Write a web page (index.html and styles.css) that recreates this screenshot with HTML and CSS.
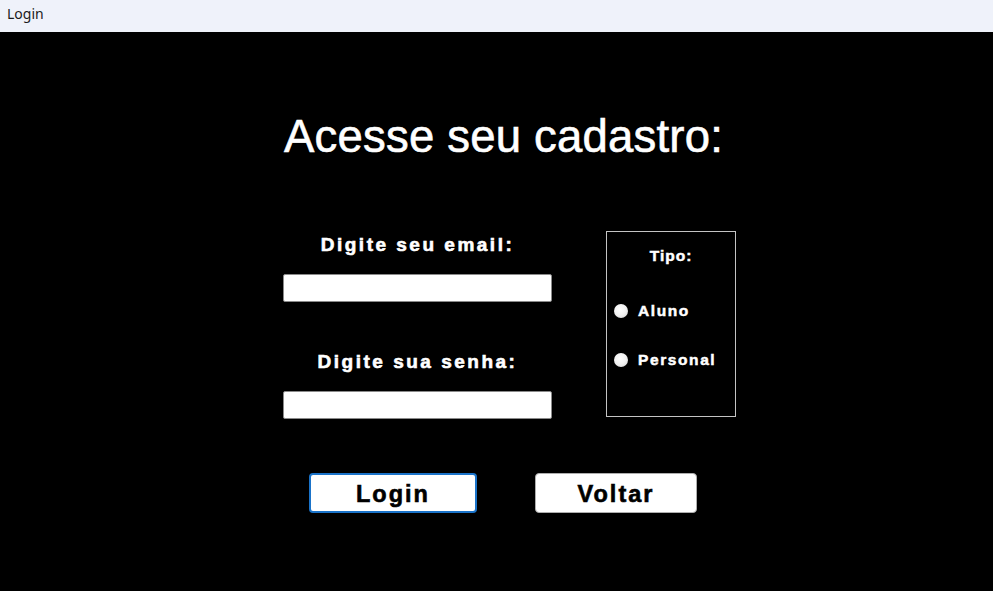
FILE: index.html
```html
<!DOCTYPE html>
<html lang="pt">
<head>
<meta charset="utf-8">
<title>Login</title>
<link rel="stylesheet" href="styles.css">
</head>
<body>
<div class="titlebar">Login</div>
<main class="form">
  <h1 class="title">Acesse seu cadastro:</h1>
  <div class="row">
    <div class="fields">
      <label class="label">Digite seu email:</label>
      <div class="input"></div>
      <label class="label label-2">Digite sua senha:</label>
      <div class="input"></div>
    </div>
    <div class="tipo">
      <div class="tipo-title">Tipo:</div>
      <div class="option"><span class="radio"></span><span>Aluno</span></div>
      <div class="option option-2"><span class="radio"></span><span>Personal</span></div>
    </div>
  </div>
  <div class="buttons">
    <button class="btn btn-login">Login</button>
    <button class="btn btn-voltar">Voltar</button>
  </div>
</main>
</body>
</html>
```

FILE: styles.css
```css
* { box-sizing: border-box; }
html, body { margin: 0; padding: 0; }
body {
  width: 993px;
  height: 591px;
  overflow: hidden;
  background: #000;
  font-family: "Liberation Sans", Arial, sans-serif;
}
.titlebar {
  height: 32px;
  background: #eff2fa;
  color: #1b1b1b;
  font-family: "Noto Sans", "Open Sans", sans-serif;
  font-size: 14px;
  line-height: 27px;
  padding-left: 7px;
}
.form {
  height: 559px;
  background: #000;
  color: #fff;
  padding-top: 82px;
  padding-left: 283px;
}
.title {
  margin: 0 0 0 1px;
  font-size: 45.5px;
  font-weight: normal;
  line-height: 45px;
  letter-spacing: 0.2px;
  -webkit-text-stroke: 0.6px #fff;
}
.row {
  display: flex;
  margin-top: 72px;
  gap: 54px;
}
.fields {
  width: 269px;
  padding-top: 5px;
  display: flex;
  flex-direction: column;
}
.label {
  display: block;
  text-align: center;
  font-weight: bold;
  font-size: 19px;
  line-height: 17px;
  letter-spacing: 2.5px;
  margin-bottom: 21px;
  -webkit-text-stroke: 0.6px #fff;
}
.label-2 { margin-top: 51px; }
.input {
  height: 28px;
  background: #fff;
  border: 1px solid #8a8a8a;
  border-radius: 2px;
}
.tipo {
  width: 130px;
  height: 186px;
  border: 1px solid #c4c4c4;
  padding: 16px 0 0 7px;
}
.tipo-title {
  font-weight: bold;
  font-size: 15.5px;
  line-height: 15px;
  letter-spacing: 1px;
  text-align: center;
  padding-right: 7px;
  margin-bottom: 40px;
  -webkit-text-stroke: 0.5px #fff;
}
.option {
  display: flex;
  align-items: center;
  gap: 10px;
  height: 15px;
  font-weight: bold;
  font-size: 15.5px;
  letter-spacing: 1.6px;
  -webkit-text-stroke: 0.5px #fff;
}
.option-2 { margin-top: 34px; }
.radio {
  width: 14px;
  height: 14px;
  border-radius: 50%;
  background: radial-gradient(circle at 45% 40%, #ffffff 0%, #f2f2f2 50%, #cfcfcf 100%);
  flex: none;
}
.buttons {
  display: flex;
  gap: 58px;
  margin-top: 54px;
  margin-left: 26px;
}
.btn {
  height: 40px;
  background: #fff;
  border: 1px solid #adadad;
  border-radius: 4px;
  font-family: "Liberation Sans", Arial, sans-serif;
  font-weight: bold;
  font-size: 23.5px;
  letter-spacing: 2px;
  color: #000;
  padding: 2px 0 0;
  -webkit-text-stroke: 0.6px #000;
}
.btn-login {
  width: 168px;
  border: 2px solid #1a73c9;
}
.btn-voltar {
  width: 162px;
}
```
